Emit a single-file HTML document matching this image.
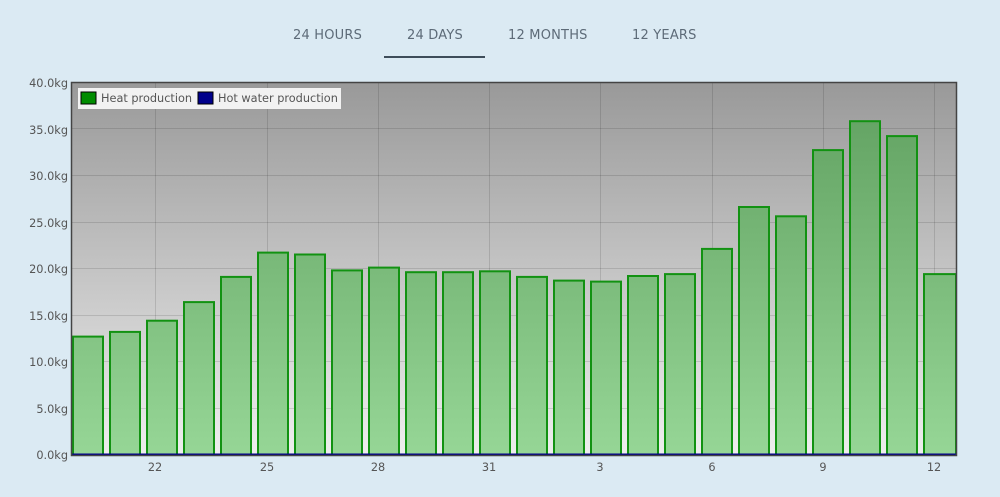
<!DOCTYPE html>
<html><head><meta charset="utf-8"><style>
body{margin:0;width:1000px;height:497px;background:#dbeaf3;font-family:"DejaVu Sans","Liberation Sans",sans-serif;overflow:hidden}
.tab{position:absolute;top:28px;font-size:13px;color:#5d6b78;letter-spacing:.2px}
</style></head><body>
<div class="tab" style="left:293px">24 HOURS</div>
<div class="tab" style="left:407px">24 DAYS</div>
<div class="tab" style="left:508px">12 MONTHS</div>
<div class="tab" style="left:632px">12 YEARS</div>
<div style="position:absolute;left:384px;top:56px;width:101px;height:2px;background:#3e4d5a"></div>
<svg width="1000" height="497" style="position:absolute;left:0;top:0" font-family="DejaVu Sans, Liberation Sans, sans-serif" font-size="11.3" fill="#555">
<defs>
<linearGradient id="bg" x1="0" y1="0" x2="0" y2="1"><stop offset="0" stop-color="#999"/><stop offset="1" stop-color="#eee"/></linearGradient>
<linearGradient id="bar" gradientUnits="userSpaceOnUse" x1="0" y1="82" x2="0" y2="455"><stop offset="0" stop-color="#5f9f5f"/><stop offset="1" stop-color="#96d696"/></linearGradient>
</defs>
<rect x="72" y="82" width="885" height="373" fill="url(#bg)"/>
<g stroke="#000" stroke-opacity=".12" stroke-width="1">
<path d="M155.5 82V455M267.5 82V455M378.5 82V455M489.5 82V455M600.5 82V455M712.5 82V455M823.5 82V455M934.5 82V455"/>
<path d="M72 128.5H957M72 175.5H957M72 222.5H957M72 268.5H957M72 315.5H957M72 361.5H957M72 408.5H957"/>
</g>
<g fill="url(#bar)" stroke="#129212" stroke-width="2">
<rect x="73" y="336.6" width="30" height="118.4"/>
<rect x="110" y="331.9" width="30" height="123.1"/>
<rect x="147" y="320.7" width="30" height="134.3"/>
<rect x="184" y="302.1" width="30" height="152.9"/>
<rect x="221" y="276.9" width="30" height="178.1"/>
<rect x="258" y="252.6" width="30" height="202.4"/>
<rect x="295" y="254.5" width="30" height="200.5"/>
<rect x="332" y="270.4" width="30" height="184.6"/>
<rect x="369" y="267.6" width="30" height="187.4"/>
<rect x="406" y="272.2" width="30" height="182.8"/>
<rect x="443" y="272.2" width="30" height="182.8"/>
<rect x="480" y="271.3" width="30" height="183.7"/>
<rect x="517" y="276.9" width="30" height="178.1"/>
<rect x="554" y="280.6" width="30" height="174.4"/>
<rect x="591" y="281.6" width="30" height="173.4"/>
<rect x="628" y="276" width="30" height="179"/>
<rect x="665" y="274.1" width="30" height="180.9"/>
<rect x="702" y="248.9" width="30" height="206.1"/>
<rect x="739" y="207" width="30" height="248"/>
<rect x="776" y="216.3" width="30" height="238.7"/>
<rect x="813" y="150.1" width="30" height="304.9"/>
<rect x="850" y="121.2" width="30" height="333.8"/>
<rect x="887" y="136.1" width="30" height="318.9"/>
<rect x="924" y="274.1" width="32" height="180.9"/>
</g>
<path d="M72 454.5H957" stroke="#00008b" stroke-width="2"/>
<rect x="71.5" y="82.5" width="885" height="373" fill="none" stroke="#444" stroke-width="1.5"/>
<rect x="78" y="88" width="263" height="21" fill="#f2f2f2"/>
<rect x="81" y="92" width="15" height="12" fill="#008c00" stroke="#000" stroke-width="1"/>
<rect x="198" y="92" width="15" height="12" fill="#00008b" stroke="#000" stroke-width="1"/>
<text x="101" y="102" fill="#555">Heat production</text>
<text x="218" y="102" fill="#555">Hot water production</text>
<g text-anchor="end">
<text x="68" y="87">40.0kg</text><text x="68" y="134">35.0kg</text><text x="68" y="180">30.0kg</text><text x="68" y="227">25.0kg</text><text x="68" y="273">20.0kg</text><text x="68" y="320">15.0kg</text><text x="68" y="366">10.0kg</text><text x="68" y="413">5.0kg</text><text x="68" y="459">0.0kg</text>
</g>
<g text-anchor="middle">
<text x="155" y="471">22</text><text x="267" y="471">25</text><text x="378" y="471">28</text><text x="489" y="471">31</text><text x="600" y="471">3</text><text x="712" y="471">6</text><text x="823" y="471">9</text><text x="934" y="471">12</text>
</g>
</svg>
</body></html>
